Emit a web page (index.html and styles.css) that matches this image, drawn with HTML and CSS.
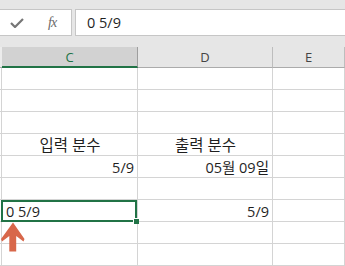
FILE: index.html
```html
<!DOCTYPE html>
<html>
<head>
<meta charset="UTF-8">
<title>분수 서식</title>
<link rel="stylesheet" href="styles.css">
</head>
<body>
<div class="fbar">
  <div class="fbtns">
    <svg class="check" width="14" height="10" viewBox="0 0 14 10"><polyline points="1,5 5,9 13,1" fill="none" stroke="#767676" stroke-width="2.2"/></svg>
    <span class="fx">fx</span>
  </div>
  <div class="finput">0 5/9</div>
</div>

<div class="sheet">
  <div class="hd corner"></div>
  <div class="hd sel">C</div>
  <div class="hd">D</div>
  <div class="hd">E</div>

  <div class="gut"></div><div class="c"></div><div class="c"></div><div class="c"></div>
  <div class="gut"></div><div class="c"></div><div class="c"></div><div class="c"></div>
  <div class="gut"></div><div class="c"></div><div class="c"></div><div class="c"></div>

  <div class="gut"></div><div class="c mid">입력 분수</div><div class="c mid">출력 분수</div><div class="c"></div>
  <div class="gut"></div><div class="c num">5/9</div><div class="c num">05월 09일</div><div class="c"></div>
  <div class="gut"></div><div class="c"></div><div class="c"></div><div class="c"></div>

  <div class="gut"></div>
  <div class="c active">0 5/9<span class="selbox"><span class="handle"></span></span>
    <svg class="arrow" width="26" height="31" viewBox="0 0 26 31"><polygon points="13,0.5 24.5,17 23.5,19.5 16.2,14 16.2,29.5 9.3,29.5 9.3,14 2,19.5 1,17" fill="#d8674a"/></svg>
  </div>
  <div class="c num">5/9</div><div class="c"></div>

  <div class="gut"></div><div class="c"></div><div class="c"></div><div class="c"></div>
  <div class="gut"></div><div class="c"></div><div class="c"></div><div class="c"></div>
</div>
</body>
</html>
```

FILE: styles.css
```css
body { margin:0; background:#e6e6e6; font-family:'Open Sans','Noto Sans CJK KR',sans-serif; color:#1f1f1f; overflow:hidden; }

.fbar { display:flex; gap:3px; height:27px; margin-top:9px; }
.fbtns { width:72px; box-sizing:border-box; background:#fff; border:1px solid #c6c6c6; border-left:none; display:flex; align-items:center; }
.check { margin-left:10px; margin-top:1px; }
.fx { margin-left:24px; font-family:'Liberation Serif',serif; font-style:italic; font-size:14px; color:#6a6a6a; letter-spacing:-1px; }
.finput { flex:1; background:#fff; border:1px solid #c6c6c6; border-right:none; padding-left:11px; font-size:14.5px; line-height:25px; }

.sheet { display:grid; grid-template-columns:2px 136px 135px 72px; grid-template-rows:21px; grid-auto-rows:22px; margin-top:11px; background:#fff; }
.hd { background:#e6e6e6; border-right:1px solid #bdbdbd; border-bottom:1px solid #ababab; box-sizing:border-box; text-align:center; font-size:13px; line-height:20px; color:#444; }
.hd.corner { border-right:none; background:#ececec; }
.hd.sel { background:#d2d2d2; color:#217346; border-bottom:2px solid #217346; border-right-color:#9e9e9e; }

.gut { border-right:1px solid #d4d4d4; border-bottom:1px solid #d4d4d4; box-sizing:border-box; width:2px; }
.c { border-right:1px solid #d4d4d4; border-bottom:1px solid #d4d4d4; box-sizing:border-box; font-size:14.5px; line-height:21px; padding:1px 3px 0 4px; white-space:nowrap; position:relative; }
.c.mid { text-align:center; font-size:15.5px; }
.c.num { text-align:right; }

.selbox { position:absolute; top:0; left:-1px; right:0; bottom:-1px; border:2px solid #217346; z-index:1; }
.handle { position:absolute; right:-4px; bottom:-4px; width:5px; height:5px; background:#217346; border-left:1px solid #fff; border-top:1px solid #fff; }
.arrow { position:absolute; left:-2px; top:22px; z-index:2; }
```
